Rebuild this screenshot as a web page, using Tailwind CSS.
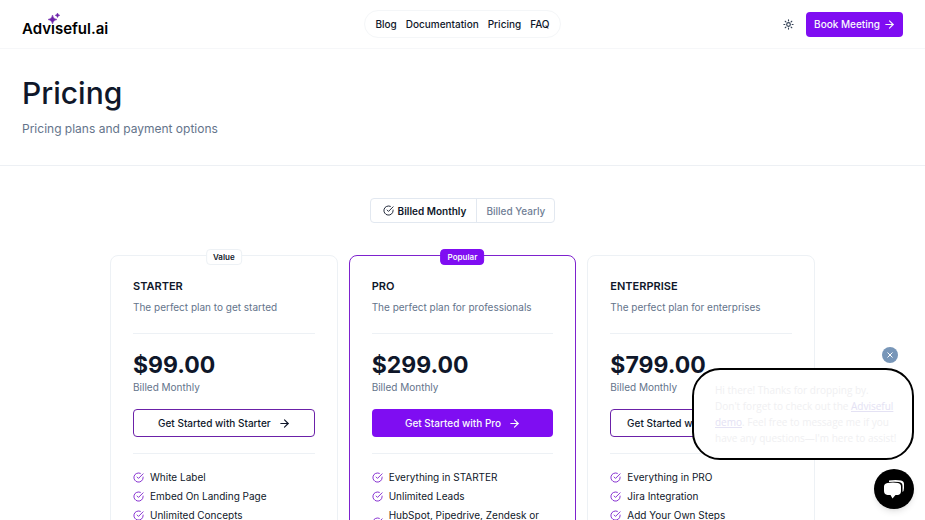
<!DOCTYPE html>
<html lang="en">
<head>
  <meta charset="UTF-8" />
  <meta name="viewport" content="width=device-width, initial-scale=1.0" />
  <title>Pricing - Adviseful.ai</title>
  <script src="https://cdn.jsdelivr.net/npm/@tailwindcss/browser@4"></script>
</head>
<body class="h-screen overflow-hidden bg-white font-['Inter',sans-serif] text-[10px] leading-[14px] text-[#0f172a]">

<!-- shared icons -->
<svg class="hidden">
  <symbol id="check" viewBox="0 0 24 24" fill="none" stroke="currentColor" stroke-width="2" stroke-linecap="round" stroke-linejoin="round">
    <path d="M22 11.08V12a10 10 0 1 1-5.93-9.14" />
    <path d="m9 11 3 3L22 4" />
  </symbol>
  <symbol id="arrow" viewBox="0 0 24 24" fill="none" stroke="currentColor" stroke-width="2.500" stroke-linecap="round" stroke-linejoin="round">
    <path d="M4 12h16" />
    <path d="m12 4 8 8-8 8" />
  </symbol>
</svg>

<!-- Header -->
<header class="grid h-[49px] grid-cols-[1fr_auto_1fr] items-center border-b border-[#f6f7f9] px-[22px]">
  <a href="#" class="relative justify-self-start pt-[10px] text-[15px] leading-5 font-semibold text-black">
    Adv&#305;seful.ai
    <svg class="absolute top-[3px] left-[25px] size-[14px]" viewBox="0 0 14 14" fill="#6b21a8">
      <path d="M5.500 3Q6 7 10 7.500Q6 8 5.500 12Q5 8 1 7.500Q5 7 5.500 3Z" stroke="#6b21a8" stroke-width=".5" />
      <path d="M10.500 1Q10.800 3 12.800 3.300Q10.800 3.600 10.500 5.600Q10.200 3.600 8.200 3.300Q10.200 3 10.500 1Z" stroke="#6b21a8" stroke-width=".5" />
    </svg>
  </a>
  <nav class="flex h-7 items-center gap-[9px] rounded-full border border-[#f4f6f8] px-[10px] font-medium">
    <a href="#">Blog</a>
    <a href="#">Documentation</a>
    <a href="#">Pricing</a>
    <a href="#">FAQ</a>
  </nav>
  <div class="flex items-center gap-3 justify-self-end">
    <button aria-label="Toggle theme" class="text-[#334155]">
      <svg class="size-[11px]" viewBox="0 0 24 24" fill="none" stroke="currentColor" stroke-width="2.500" stroke-linecap="round">
        <circle cx="12" cy="12" r="4" />
        <path d="M12 2v2M12 20v2M4.900 4.900l1.400 1.400M17.700 17.700l1.400 1.400M2 12h2M20 12h2M6.300 17.700l-1.400 1.400M19.100 4.900l-1.400 1.400" />
      </svg>
    </button>
    <button class="flex h-[25px] items-center gap-1 rounded bg-[#7f0df2] px-2 font-medium text-[#f8fafc]">
      Book Meeting
      <svg class="size-[11px]"><use href="#arrow" /></svg>
    </button>
  </div>
</header>

<!-- Page title -->
<section class="border-b border-[#edf0f4] px-[22px] pt-[27px] pb-[27px]">
  <h1 class="text-[30px] leading-[34px] font-medium">Pricing</h1>
  <p class="mt-[10px] text-[12px] leading-[18px] text-[#64748b]">Pricing plans and payment options</p>
</section>

<main class="pt-8">
  <div class="mx-auto flex h-[25px] w-fit rounded border border-[#e2e8f0]">
    <button class="flex items-center gap-1 pr-[10px] pl-3 font-semibold">
      <svg class="size-[11px]"><use href="#check" /></svg>
      Billed Monthly
    </button>
    <button class="border-l border-[#e2e8f0] px-[9px] font-medium text-[#718096]">Billed Yearly</button>
  </div>

  <div class="mx-auto mt-8 grid max-w-[705px] grid-cols-3 gap-[11px]">
    <!-- Starter -->
    <article class="relative rounded-lg border border-[#edf1f5] px-[22px] pt-[22px] pb-6">
      <span class="absolute -top-[7px] left-1/2 -translate-x-1/2 rounded border border-[#edf1f5] bg-white px-[6px] text-[8px] leading-[14px] font-semibold">Value</span>
      <h2 class="text-[11px] leading-4 font-semibold">STARTER</h2>
      <p class="mt-[6px] text-[#64748b]">The perfect plan to get started</p>
      <hr class="my-[19px] border-[#edf1f5]" />
      <p class="text-[23px] leading-6 font-bold">$99.00</p>
      <p class="mt-[3px] text-[#64748b]">Billed Monthly</p>
      <button class="mt-[15px] flex h-7 w-full items-center justify-center gap-2 rounded border border-[#6b21a8] font-medium">
        Get Started with Starter
        <svg class="size-[11px]"><use href="#arrow" /></svg>
      </button>
      <hr class="my-4 border-[#edf1f5]" />
      <ul class="flex flex-col gap-[5px]">
        <li class="flex items-center gap-[6px]"><svg class="size-[11px] shrink-0 text-[#7e22ce]"><use href="#check" /></svg>White Label</li>
        <li class="flex items-center gap-[6px]"><svg class="size-[11px] shrink-0 text-[#7e22ce]"><use href="#check" /></svg>Embed On Landing Page</li>
        <li class="flex items-center gap-[6px]"><svg class="size-[11px] shrink-0 text-[#7e22ce]"><use href="#check" /></svg>Unlimited Concepts</li>
      </ul>
    </article>

    <!-- Pro -->
    <article class="relative rounded-lg border border-[#7e22ce] px-[22px] pt-[22px] pb-6">
      <span class="absolute -top-[7px] left-1/2 -translate-x-1/2 rounded border border-[#7f0df2] bg-[#7f0df2] px-[6px] text-[8px] leading-[14px] font-semibold text-[#f8fafc]">Popular</span>
      <h2 class="text-[11px] leading-4 font-semibold">PRO</h2>
      <p class="mt-[6px] text-[#64748b]">The perfect plan for professionals</p>
      <hr class="my-[19px] border-[#edf1f5]" />
      <p class="text-[23px] leading-6 font-bold">$299.00</p>
      <p class="mt-[3px] text-[#64748b]">Billed Monthly</p>
      <button class="mt-[15px] flex h-7 w-full items-center justify-center gap-2 rounded bg-[#7f0df2] font-medium text-[#f8fafc]">
        Get Started with Pro
        <svg class="size-[11px]"><use href="#arrow" /></svg>
      </button>
      <hr class="my-4 border-[#edf1f5]" />
      <ul class="flex flex-col gap-[5px]">
        <li class="flex items-center gap-[6px]"><svg class="size-[11px] shrink-0 text-[#7e22ce]"><use href="#check" /></svg>Everything in STARTER</li>
        <li class="flex items-center gap-[6px]"><svg class="size-[11px] shrink-0 text-[#7e22ce]"><use href="#check" /></svg>Unlimited Leads</li>
        <li class="flex items-center gap-[6px]"><svg class="size-[11px] shrink-0 text-[#7e22ce]"><use href="#check" /></svg>HubSpot, Pipedrive, Zendesk or Salesforce</li>
      </ul>
    </article>

    <!-- Enterprise -->
    <article class="relative rounded-lg border border-[#edf1f5] px-[22px] pt-[22px] pb-6">
      <h2 class="text-[11px] leading-4 font-semibold">ENTERPRISE</h2>
      <p class="mt-[6px] text-[#64748b]">The perfect plan for enterprises</p>
      <hr class="my-[19px] border-[#edf1f5]" />
      <p class="text-[23px] leading-6 font-bold">$799.00</p>
      <p class="mt-[3px] text-[#64748b]">Billed Monthly</p>
      <button class="mt-[15px] flex h-7 w-full items-center justify-center gap-2 rounded border border-[#6b21a8] font-medium">
        Get Started with Enterprise
        <svg class="size-[11px]"><use href="#arrow" /></svg>
      </button>
      <hr class="my-4 border-[#edf1f5]" />
      <ul class="flex flex-col gap-[5px]">
        <li class="flex items-center gap-[6px]"><svg class="size-[11px] shrink-0 text-[#7e22ce]"><use href="#check" /></svg>Everything in PRO</li>
        <li class="flex items-center gap-[6px]"><svg class="size-[11px] shrink-0 text-[#7e22ce]"><use href="#check" /></svg>Jira Integration</li>
        <li class="flex items-center gap-[6px]"><svg class="size-[11px] shrink-0 text-[#7e22ce]"><use href="#check" /></svg>Add Your Own Steps</li>
      </ul>
    </article>
  </div>
</main>

<!-- Chat widget -->
<aside class="fixed right-[11px] bottom-[11px] flex w-[222px] flex-col items-end">
  <button aria-label="Close message" class="mr-4 mb-[5px] flex size-4 items-center justify-center rounded-full bg-[#7896b8] text-white">
    <svg class="size-2" viewBox="0 0 8 8" stroke="currentColor"><path d="m1.500 1.500 5 5m0-5-5 5" /></svg>
  </button>
  <div class="w-full rounded-[28px] border-2 border-black bg-white py-[12px] pl-[21px] font-['Open_Sans',sans-serif] text-[10px] leading-4 whitespace-nowrap text-[#f0f0f2]">
    Hi there! Thanks for dropping by.<br />
    Don't forget to check out the <a href="#" class="text-[#e4e2f4] underline">Adviseful</a><br />
    <a href="#" class="text-[#e4e2f4] underline">demo</a>. Feel free to message me if you<br />
    have any questions—I'm here to assist!
  </div>
  <button aria-label="Open chat" class="mt-[9px] flex size-10 items-center justify-center rounded-full bg-black shadow-md">
    <svg class="size-6" viewBox="0 0 24 24" fill="#fff">
      <path d="M7 3.500Q14 2.500 19 3.500Q22 4 22 7V11Q22 14 20.500 15V9Q20.500 5.500 17 5Q12 4.300 7 5Z" />
      <path d="M5.500 6Q11 5.200 16 6Q19 6.500 19 9.500V14Q19 17.500 16 18H13.500L10.500 21.500L8.500 18H5.500Q2 17.500 2 14V9.500Q2 6.500 5.500 6Z" />
    </svg>
  </button>
</aside>

</body>
</html>
